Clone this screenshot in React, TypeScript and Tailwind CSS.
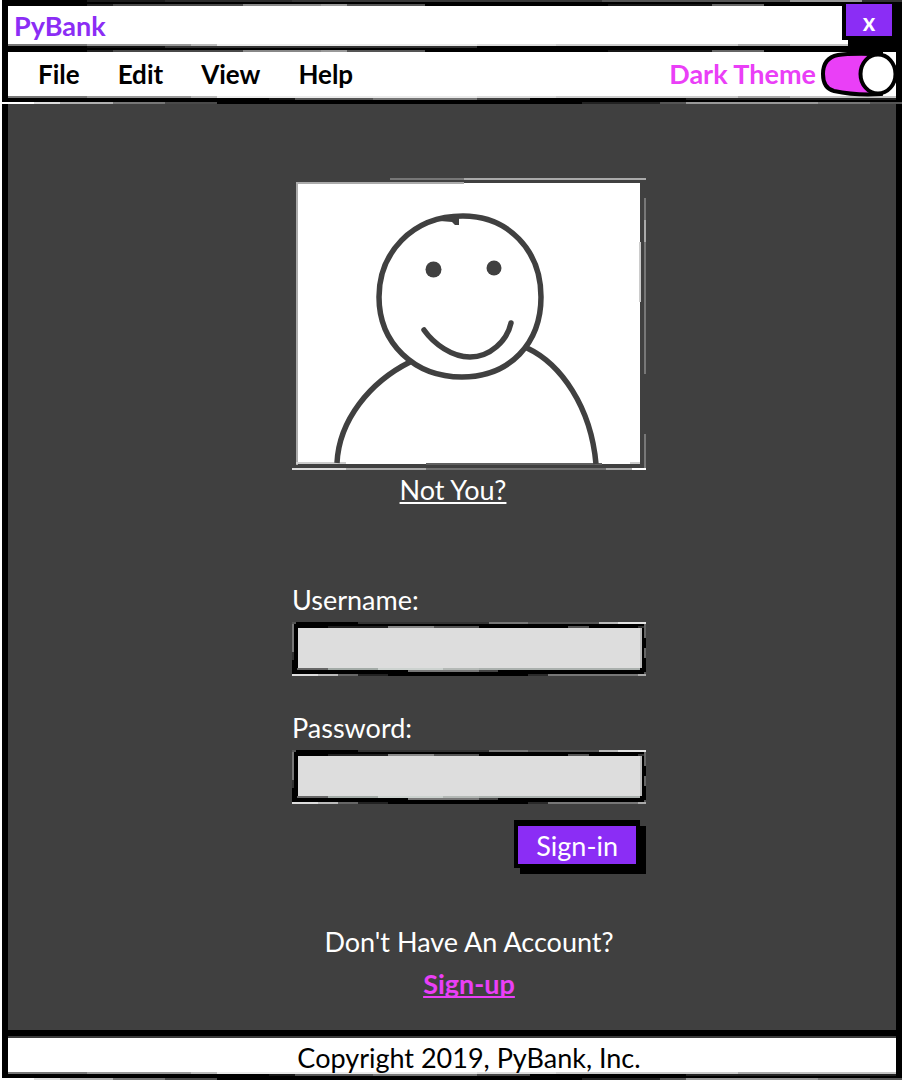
import { useState } from "react";

type Segment = [end: number, color: string];

/* Uneven ink of the marker line, drawn as 2px rows over a solid border. */
function Ink({ rows, className }: { rows: Segment[][]; className: string }) {
  return (
    <svg
      aria-hidden="true"
      viewBox={`0 0 900 ${rows.length * 2}`}
      preserveAspectRatio="none"
      shapeRendering="crispEdges"
      className={`pointer-events-none absolute ${className}`}
    >
      {rows.map((row, r) =>
        row.map(([end, color], i) => {
          const start = i === 0 ? 0 : row[i - 1][0];
          return <rect key={`${r}-${i}`} x={start} y={r * 2} width={end - start} height={2} fill={color} />;
        }),
      )}
    </svg>
  );
}

const upper: Segment[] = [[85, "#000"], [163, "#1c1c1c"], [290, "#2c2c2c"], [600, "#383838"], [788, "#555"], [860, "#999"], [900, "#333"]];
const middle: Segment[] = [[85, "#000"], [163, "#111"], [475, "#333"], [900, "#000"]];
const under: Segment[] = [[85, "#000"], [111, "#222"], [241, "#4a4a4a"], [319, "#888"], [345, "#999"], [423, "#555"], [606, "#000"], [710, "#161616"], [762, "#666"], [900, "#000"]];
const solid: Segment[] = [[900, "#000"]];
const lower: Segment[] = [[6, "#000"], [85, "#777"], [189, "#999"], [215, "#bbb"], [475, "#eaeaea"], [554, "#dcdcdc"], [736, "#ccc"], [788, "#aaa"], [894, "#c4c4c4"], [900, "#000"]];
const base: Segment[] = [[267, "#000"], [293, "#161616"], [371, "#555"], [475, "#777"], [528, "#444"], [684, "#000"], [894, "#222"], [900, "#000"]];
const shed: Segment[] = [[32, "#fff"], [58, "#ddd"], [111, "#b0b0b0"], [163, "#777"], [215, "#4a4a4a"], [580, "#000"], [658, "#222"], [684, "#555"], [816, "#999"], [868, "#777"], [900, "#555"]];

const fieldTop: Segment[][] = [
  [[10, "#555"], [168, "#000"], [500, "#333"], [600, "#777"], [780, "#555"], [830, "#bbb"], [900, "#e4e4e4"]],
  solid,
  [[92, "#000"], [244, "#222"], [360, "#888"], [475, "#555"], [702, "#000"], [755, "#555"], [880, "#000"], [900, "#333"]],
];
const fieldBottom: Segment[][] = [
  [[12, "#000"], [92, "#666"], [218, "#a2aaa6"], [385, "#ccd2cf"], [475, "#b4b9b6"], [885, "#aab0ad"], [900, "#000"]],
  [[295, "#000"], [475, "#777"], [524, "#444"], [900, "#000"]],
  [[895, "#000"], [900, "#555"]],
  [[66, "#ddd"], [117, "#bbb"], [168, "#666"], [244, "#222"], [600, "#000"], [651, "#2a2a2a"], [880, "#777"], [900, "#aaa"]],
];

function Field({ id, label, type }: { id: string; label: string; type: string }) {
  return (
    <div className="flex flex-col gap-[6px]">
      <label htmlFor={id}>{label}</label>
      <div className="relative">
        <input
          id={id}
          type={type}
          className="block h-[54px] w-full border-[6px] border-black bg-[#dddddd] px-3 text-black outline-none"
        />
        <Ink rows={fieldTop} className="top-0 left-0 h-[6px] w-full" />
        <Ink rows={fieldBottom} className="bottom-0 left-0 h-[8px] w-full" />
        <svg aria-hidden="true" viewBox="0 0 2 54" preserveAspectRatio="none" className="pointer-events-none absolute top-0 left-0 h-full w-[2px]">
          <path d="M1 2v28" stroke="#777" strokeWidth="2" />
          <path d="M1 30v8" stroke="#333" strokeWidth="2" />
        </svg>
        <svg aria-hidden="true" viewBox="0 0 6 54" preserveAspectRatio="none" className="pointer-events-none absolute top-0 right-0 h-full w-[6px]">
          <path d="M5 2v14M5 26v10" stroke="#666" strokeWidth="2" />
          <path d="M1 6v40" stroke="#bbb" strokeWidth="2" />
        </svg>
      </div>
    </div>
  );
}

function Portrait() {
  return (
    <svg role="img" aria-label="User portrait" viewBox="0 0 354 292" className="block w-full">
      <rect x="5" y="5" width="343" height="281" fill="#fff" />
      <g fill="none" strokeWidth="2" shapeRendering="crispEdges">
        <path d="M5 4v283M5 5h167" stroke="#ababab" />
        <path d="M98 1h76M353 20v176" stroke="#777" />
        <path d="M172 1h182M353 42v22" stroke="#aaa" />
        <path d="M353 256v34" stroke="#777" />
        <path d="M0 291h56" stroke="#ddd" />
        <path d="M54 291h80M310 291h30" stroke="#aaa" />
        <path d="M134 291h180" stroke="#707070" />
        <path d="M340 291h14" stroke="#fff" />
        <path d="M348 64v60" stroke="#ccc" />
        <path d="M4 285h50M338 285h10" stroke="#ccc" />
        <path d="M134 286h176" stroke="#606060" />
      </g>
      <g fill="none" stroke="#404040" strokeWidth="5.5" strokeLinecap="round">
        <path d="M171 38C119 38 87 76 87 119C87 165 122 199 170 199C218 199 249 165 249 119C249 72 216 38 171 38Z" />
        <path d="M132 152C142 166 160 179 178 179C198 179 215 163 219 145" />
        <path d="M118 184C78 204 47 242 45 285" strokeLinecap="butt" />
        <path d="M235 170C269 186 299 229 304 286" strokeLinecap="butt" />
      </g>
      <path d="M148 40L167 38L167 47H163L160 44L148 43Z" fill="#404040" />
      <circle cx="141.500" cy="91.500" r="8" fill="#404040" />
      <circle cx="202" cy="90" r="7.500" fill="#404040" />
    </svg>
  );
}

export default function App() {
  const [dark, setDark] = useState(true);

  return (
    <div className="flex min-h-screen flex-col bg-white pr-1 pl-[2px] font-['Lato','Noto_Sans',sans-serif] text-[27px] leading-8 text-black">
      <header className="relative flex h-[46px] items-start justify-between border-x-[6px] border-t-[6px] border-black bg-white">
        <h1 className="pt-1 pl-[6px] font-bold text-[#8b2df5]">PyBank</h1>
        <Ink rows={[upper, solid, under]} className="-top-[6px] -left-[6px] h-[6px] w-[calc(100%+12px)]" />
        <button
          type="button"
          aria-label="Close"
          className="relative z-10 -mt-1 h-[38px] w-[54px] border-4 border-t-2 border-black bg-[#8b2df5] pt-1 text-2xl leading-7 font-bold text-white shadow-[6px_6px_0_0_#000]"
        >
          x
        </button>
      </header>

      <nav className="relative flex h-[58px] items-center justify-between border-x-[6px] border-t-[6px] border-b-[6px] border-black bg-white pb-[2px] pl-[30px]">
        <Ink rows={[lower, middle, solid, under]} className="-top-[8px] -left-[6px] h-[8px] w-[calc(100%+12px)]" />
        <Ink rows={[lower, base, solid, shed]} className="-bottom-[6px] -left-[6px] h-[8px] w-[calc(100%+12px)]" />
        <div className="flex gap-[38px] text-[26px] font-bold">
          <button type="button">File</button>
          <button type="button">Edit</button>
          <button type="button">View</button>
          <button type="button">Help</button>
        </div>
        <label className="relative -mr-[2px] flex cursor-pointer items-center gap-1 font-bold text-[#ea3ff7]">
          Dark Theme
          <input
            type="checkbox"
            role="switch"
            checked={dark}
            onChange={(e) => setDark(e.target.checked)}
            className="absolute inset-0 cursor-pointer opacity-0"
          />
          <svg aria-hidden="true" viewBox="0 0 78 46" className="h-[46px] w-[78px]">
            <path
              d="M18 4C30 2 47 3 61 3V43C47 44 28 43 14 40C6 38 3 31 3 23C3 12 8 6 18 4Z"
              fill={dark ? "#ea3ff7" : "#ddd"}
              stroke="#000"
              strokeWidth="4"
            />
            <ellipse cx={dark ? 58 : 22} cy="23" rx="17.500" ry="19.500" fill="#fff" stroke="#000" strokeWidth="4" />
          </svg>
        </label>
      </nav>

      <main className="flex flex-1 flex-col items-center border-x-[6px] border-black bg-[#404040] pt-[74px] pb-[30px] pl-[34px] text-white">
        <div className="flex w-[354px] flex-col">
          <Portrait />
          <div className="mt-1 pr-8 text-center">
            <a href="#switch-user" className="underline decoration-2 underline-offset-2 [text-decoration-skip-ink:none]">
              Not You?
            </a>
          </div>
          <form className="mt-[78px] flex flex-col" onSubmit={(e) => e.preventDefault()}>
            <div className="flex flex-col gap-9">
              <Field id="username" label="Username:" type="text" />
              <Field id="password" label="Password:" type="password" />
            </div>
            <button
              type="submit"
              className="mt-4 mr-[6px] mb-[6px] h-12 self-end border-4 border-t-[6px] border-black bg-[#8b2df5] px-[18px] pt-[2px] leading-8 text-white shadow-[6px_6px_0_0_#000]"
            >
              Sign-in
            </button>
          </form>
        </div>
        <p className="mt-[52px]">Don't Have An Account?</p>
        <a
          href="#sign-up"
          className="mt-[10px] font-bold text-[#ea3ff7] underline decoration-2 underline-offset-2 [text-decoration-skip-ink:none]"
        >
          Sign-up
        </a>
      </main>

      <footer className="relative flex h-[50px] items-center justify-center border-x-[6px] border-t-8 border-b-[6px] border-black bg-white pt-1 pl-[34px]">
        <Ink rows={[solid, solid, solid, [[6, "#000"], [894, "#3c3c3c"], [900, "#000"]]]} className="-top-[8px] -left-[6px] h-[8px] w-[calc(100%+12px)]" />
        <Ink rows={[lower, base, solid, shed]} className="-bottom-[6px] -left-[6px] h-[8px] w-[calc(100%+12px)]" />
        <p className="relative">Copyright 2019, PyBank, Inc.</p>
      </footer>
    </div>
  );
}
